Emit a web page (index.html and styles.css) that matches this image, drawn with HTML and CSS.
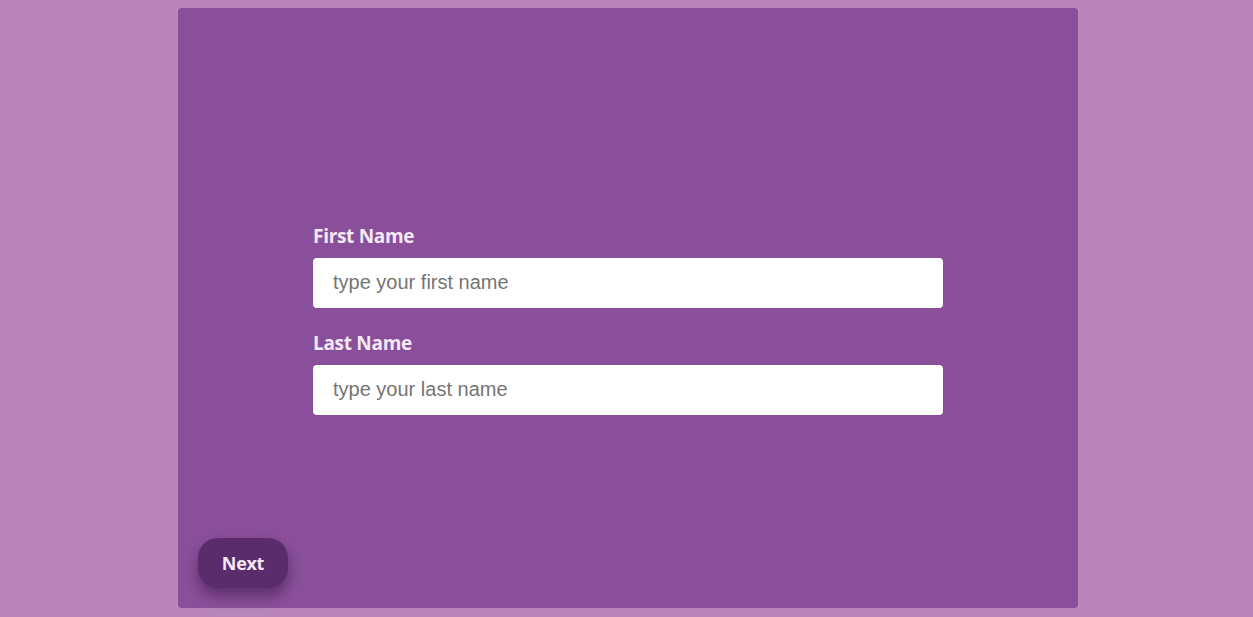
FILE: index.html
```html
<!DOCTYPE html>
<html>
<head>
<meta charset="utf-8">
<link rel="stylesheet" href="styles.css">
</head>
<body>
<div class="card">
  <form class="form">
    <div class="field">
      <label class="label" for="first">First Name</label>
      <input class="input" id="first" type="text" placeholder="type your first name">
    </div>
    <div class="field">
      <label class="label" for="last">Last Name</label>
      <input class="input" id="last" type="text" placeholder="type your last name">
    </div>
  </form>
  <div class="actions">
    <button class="next" type="button">Next</button>
  </div>
</div>
</body>
</html>
```
FILE: styles.css
```css
html, body { height: 100%; }
body {
  margin: 0;
  padding: 8px 0 0 3px;
  box-sizing: border-box;
  background: #b886ba;
  font-family: "Open Sans", "Lato", sans-serif;
}
.card {
  width: 900px;
  height: 600px;
  margin: 0 auto;
  background: #8a4f9a;
  border-radius: 4px;
  display: flex;
  flex-direction: column;
  padding: 0 20px 20px;
  box-sizing: border-box;
}
.form {
  width: 630px;
  margin: 216px auto 0;
  display: flex;
  flex-direction: column;
  gap: 23px;
}
.field {
  display: flex;
  flex-direction: column;
  gap: 10px;
}
.label {
  color: #f3e8f3;
  font-size: 19px;
  font-weight: 700;
  line-height: 24px;
  letter-spacing: -0.3px;
}
.input {
  height: 50px;
  box-sizing: border-box;
  border: none;
  border-radius: 4px;
  background: #fff;
  padding: 0 20px 2px;
  font-family: "Liberation Sans", Arial, sans-serif;
  font-size: 20px;
  outline: none;
}
.input::placeholder { color: #757575; }
.actions {
  margin-top: auto;
  display: flex;
}
.next {
  width: 90px;
  height: 50px;
  border: none;
  border-radius: 20px;
  background: #5a2c6c;
  color: #f3e8f3;
  font-family: "Open Sans", Arial, sans-serif;
  font-weight: 700;
  font-size: 18px;
  letter-spacing: -0.3px;
  box-shadow: 0 8px 14px rgba(40, 10, 50, 0.45);
  cursor: pointer;
}
```
